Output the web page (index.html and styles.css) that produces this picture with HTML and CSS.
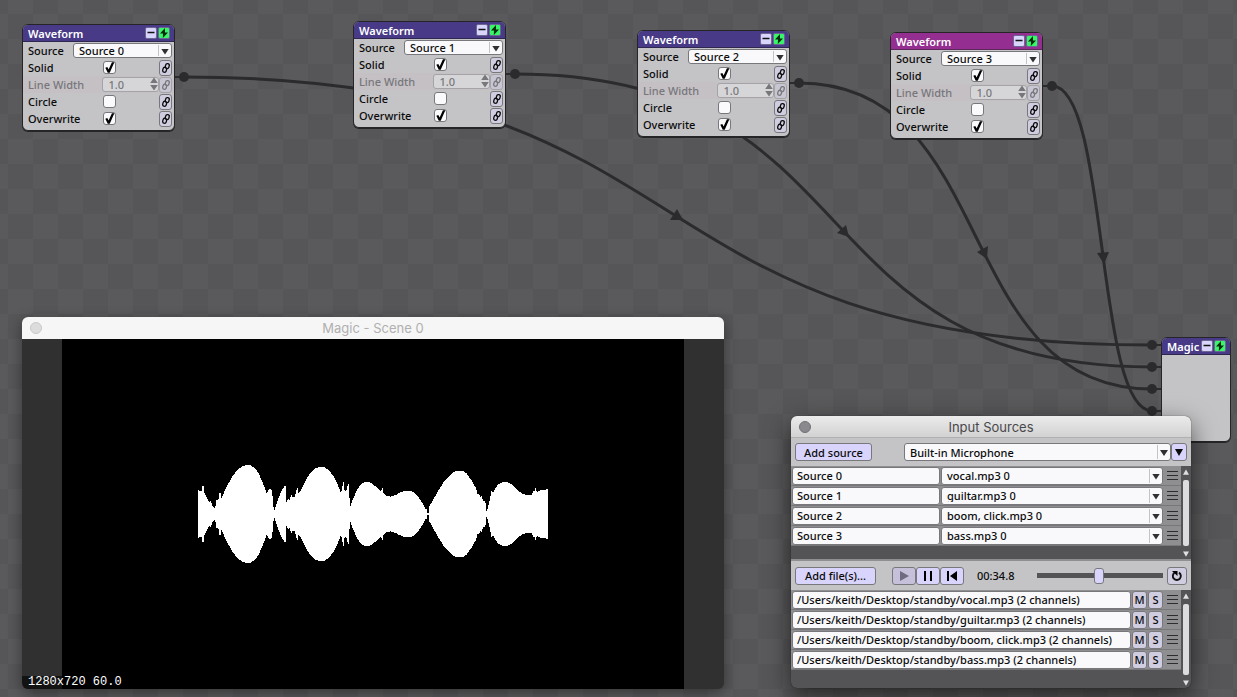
FILE: index.html
```
<!DOCTYPE html>
<html lang="en">
<head>
<meta charset="utf-8">
<title>Magic</title>
<link rel="stylesheet" href="styles.css">
</head>
<body>
<svg class="defs" aria-hidden="true">
  <symbol id="link" viewBox="0 0 10 12"><g fill="none" stroke="currentColor" stroke-width="1.3"><rect x="4.500" y="1.500" width="3.600" height="5" rx="1.800" transform="rotate(16 6 4)"/><rect x="1.800" y="5.400" width="3.600" height="5" rx="1.800" transform="rotate(16 4 8)"/></g></symbol>
  <symbol id="minus" viewBox="0 0 12 12"><path d="M2.500 5.500h7" stroke="#111" stroke-width="1.500"/></symbol>
  <symbol id="bolt" viewBox="0 0 12 12"><path d="M7 1 2 6.500h3L4.800 11 10 5.500h-3z" fill="#062b0d"/></symbol>
  <symbol id="spin" viewBox="0 0 8 14"><path d="M4 0.500 7.800 6H.2zM4 13.500 7.800 8H.2z" fill="currentColor"/></symbol>
  <symbol id="grip" viewBox="0 0 11 11"><path d="M0 1.500h11M0 5.500h11M0 9.500h11" stroke="#2d2d2f"/></symbol>
  <symbol id="down" viewBox="0 0 8 7"><path d="M0 0h8L4 7z" fill="currentColor"/></symbol>
  <symbol id="up" viewBox="0 0 8 7"><path d="M0 7h8L4 0z" fill="currentColor"/></symbol>
</svg>
<main class="canvas">
  <svg class="wires" aria-hidden="true">
    <g class="wire">
      <path d="M184 77C725 77 611 345 1152 345"/>
      <path d="M515 74C876 74 791 367 1152 367"/>
      <path d="M799 83C1000 83 951 389 1152 389"/>
      <path d="M1052 86C1109 86 1095 411 1152 411"/>
    </g>
    <path class="stub" d="M175 77h9M506 74h9M790 83h9M1043 86h9M1152 345h9M1152 367h9M1152 389h9M1152 411h9"/>
    <g class="joint">
      <circle cx="184" cy="77" r="5"/><circle cx="515" cy="74" r="5"/><circle cx="799" cy="83" r="5"/><circle cx="1052" cy="86" r="5"/>
      <circle cx="1152" cy="345" r="5"/><circle cx="1152" cy="367" r="5"/><circle cx="1152" cy="389" r="5"/><circle cx="1152" cy="411" r="5"/>
      <path d="M683 220 670 220 677 209z"/><path d="M849 237 837 233 846 225z"/><path d="M987 259 977 252 988 246z"/><path d="M1104 264 1097 253 1109 252z"/>
    </g>
  </svg>

  <section class="node n0">
    <header class="bar"><h2>Waveform</h2><button class="mini" aria-label="Collapse"><svg><use href="#minus"/></svg></button><button class="mini on" aria-label="Active"><svg><use href="#bolt"/></svg></button></header>
    <div class="row"><label for="a1">Source</label><span class="pick"><select id="a1"><option>Source 0</option></select></span></div>
    <div class="row"><label for="a2">Solid</label><input type="checkbox" id="a2" checked><button class="link" aria-label="Link Solid"><svg><use href="#link"/></svg></button></div>
    <div class="row off"><label for="a3">Line Width</label><span class="num"><input type="text" id="a3" value="1.0" disabled><svg><use href="#spin"/></svg></span><button class="link" disabled aria-label="Link Line Width"><svg><use href="#link"/></svg></button></div>
    <div class="row"><label for="a4">Circle</label><input type="checkbox" id="a4"><button class="link" aria-label="Link Circle"><svg><use href="#link"/></svg></button></div>
    <div class="row"><label for="a5">Overwrite</label><input type="checkbox" id="a5" checked><button class="link" aria-label="Link Overwrite"><svg><use href="#link"/></svg></button></div>
  </section>

  <section class="node n1">
    <header class="bar"><h2>Waveform</h2><button class="mini" aria-label="Collapse"><svg><use href="#minus"/></svg></button><button class="mini on" aria-label="Active"><svg><use href="#bolt"/></svg></button></header>
    <div class="row"><label for="b1">Source</label><span class="pick"><select id="b1"><option>Source 1</option></select></span></div>
    <div class="row"><label for="b2">Solid</label><input type="checkbox" id="b2" checked><button class="link" aria-label="Link Solid"><svg><use href="#link"/></svg></button></div>
    <div class="row off"><label for="b3">Line Width</label><span class="num"><input type="text" id="b3" value="1.0" disabled><svg><use href="#spin"/></svg></span><button class="link" disabled aria-label="Link Line Width"><svg><use href="#link"/></svg></button></div>
    <div class="row"><label for="b4">Circle</label><input type="checkbox" id="b4"><button class="link" aria-label="Link Circle"><svg><use href="#link"/></svg></button></div>
    <div class="row"><label for="b5">Overwrite</label><input type="checkbox" id="b5" checked><button class="link" aria-label="Link Overwrite"><svg><use href="#link"/></svg></button></div>
  </section>

  <section class="node n2">
    <header class="bar"><h2>Waveform</h2><button class="mini" aria-label="Collapse"><svg><use href="#minus"/></svg></button><button class="mini on" aria-label="Active"><svg><use href="#bolt"/></svg></button></header>
    <div class="row"><label for="c1">Source</label><span class="pick"><select id="c1"><option>Source 2</option></select></span></div>
    <div class="row"><label for="c2">Solid</label><input type="checkbox" id="c2" checked><button class="link" aria-label="Link Solid"><svg><use href="#link"/></svg></button></div>
    <div class="row off"><label for="c3">Line Width</label><span class="num"><input type="text" id="c3" value="1.0" disabled><svg><use href="#spin"/></svg></span><button class="link" disabled aria-label="Link Line Width"><svg><use href="#link"/></svg></button></div>
    <div class="row"><label for="c4">Circle</label><input type="checkbox" id="c4"><button class="link" aria-label="Link Circle"><svg><use href="#link"/></svg></button></div>
    <div class="row"><label for="c5">Overwrite</label><input type="checkbox" id="c5" checked><button class="link" aria-label="Link Overwrite"><svg><use href="#link"/></svg></button></div>
  </section>

  <section class="node n3 selected">
    <header class="bar"><h2>Waveform</h2><button class="mini" aria-label="Collapse"><svg><use href="#minus"/></svg></button><button class="mini on" aria-label="Active"><svg><use href="#bolt"/></svg></button></header>
    <div class="row"><label for="d1">Source</label><span class="pick"><select id="d1"><option>Source 3</option></select></span></div>
    <div class="row"><label for="d2">Solid</label><input type="checkbox" id="d2" checked><button class="link" aria-label="Link Solid"><svg><use href="#link"/></svg></button></div>
    <div class="row off"><label for="d3">Line Width</label><span class="num"><input type="text" id="d3" value="1.0" disabled><svg><use href="#spin"/></svg></span><button class="link" disabled aria-label="Link Line Width"><svg><use href="#link"/></svg></button></div>
    <div class="row"><label for="d4">Circle</label><input type="checkbox" id="d4"><button class="link" aria-label="Link Circle"><svg><use href="#link"/></svg></button></div>
    <div class="row"><label for="d5">Overwrite</label><input type="checkbox" id="d5" checked><button class="link" aria-label="Link Overwrite"><svg><use href="#link"/></svg></button></div>
  </section>

  <section class="node magic">
    <header class="bar"><h2>Magic</h2><button class="mini" aria-label="Collapse"><svg><use href="#minus"/></svg></button><button class="mini on" aria-label="Active"><svg><use href="#bolt"/></svg></button></header>
    <div class="blank"></div>
  </section>

  <section class="window scene">
    <header class="title"><button class="dot" aria-label="Close"></button><h1>Magic - Scene 0</h1></header>
    <div class="stage">
      <svg class="wave" viewBox="24 0 1050 384" shape-rendering="crispEdges" role="img" aria-label="Waveform">
        <path id="half" fill="#fff" d="M24 193V120L35 124 36 108H41L43 128 52 145 57 158 62 152 66 165 72 174H76L78 150H84L86 145 88 130H92L95 145 100 132 110 110 125 83 140 62 155 50 165 46H182L195 55 205 69 215 90 225 115 229 130 235 122 240 115 244 118 248 140 250 170 254 180 258 168 265 145 275 122 284 108H287L288 158 295 145 300 152 303 132 308 143 315 140 318 124 322 110 326 130 330 125 340 105 350 86 362 67 375 56 388 51H402L415 59 430 78 442 102 450 122 453 130 456 118 459 97H462L464 128 470 118 474 102H477L478 140 481 170 488 150 500 122 510 106 522 97 530 95 540 97 555 108 573 125 576 114H579L580 130 590 138 602 140 615 136 630 128 645 123 662 122 675 130 688 145 700 163 707 178H711L712 188H717L718 170 730 148 745 122 760 98 775 80 790 67 802 62H818L830 70 845 92 858 115 864 136 867 128 870 142 874 138 880 154H886L889 184 892 178 898 155 905 122 910 128 915 115 925 103 938 96H952L965 103 980 118 995 130 1010 135 1025 134 1030 122 1034 122 1037 114 1040 126 1055 120 1074 118V193z"/>
        <use href="#half" transform="translate(0 384) scale(1 -1)"/>
      </svg>
    </div>
    <p class="stats">1280x720 60.0</p>
  </section>

  <section class="window inputs">
    <header class="title"><button class="dot" aria-label="Close"></button><h1>Input Sources</h1></header>
    <div class="tools">
      <button class="btn add">Add source</button>
      <span class="pick device"><select aria-label="Device"><option>Built-in Microphone</option></select></span>
      <button class="btn more" aria-label="More"><svg><use href="#down"/></svg></button>
    </div>
    <div class="list first">
      <ul>
        <li><input type="text" class="name" aria-label="Name" value="Source 0"><span class="pick"><select aria-label="Channel"><option>vocal.mp3 0</option></select></span><svg class="grip"><use href="#grip"/></svg></li>
        <li><input type="text" class="name" aria-label="Name" value="Source 1"><span class="pick"><select aria-label="Channel"><option>guiltar.mp3 0</option></select></span><svg class="grip"><use href="#grip"/></svg></li>
        <li><input type="text" class="name" aria-label="Name" value="Source 2"><span class="pick"><select aria-label="Channel"><option>boom, click.mp3 0</option></select></span><svg class="grip"><use href="#grip"/></svg></li>
        <li><input type="text" class="name" aria-label="Name" value="Source 3"><span class="pick"><select aria-label="Channel"><option>bass.mp3 0</option></select></span><svg class="grip"><use href="#grip"/></svg></li>
      </ul>
      <div class="scroll"><svg><use href="#up"/></svg><i></i><svg><use href="#down"/></svg></div>
    </div>
    <div class="tools transport">
      <button class="btn files">Add file(s)...</button>
      <div class="keys">
        <button class="btn" disabled aria-label="Play"><svg viewBox="0 0 12 12"><path d="M2 1 11 6 2 11z" fill="#716a80"/></svg></button>
        <button class="btn" aria-label="Pause"><svg viewBox="0 0 12 12"><path d="M2 1h2v10H2zM8 1h2v10H8z"/></svg></button>
        <button class="btn" aria-label="Rewind"><svg viewBox="0 0 12 12"><path d="M1 1h2v10H1zM11 1v10L4 6z"/></svg></button>
      </div>
      <output class="time">00:34.8</output>
      <input type="range" class="seek" aria-label="Position" min="0" max="100" value="49">
      <button class="btn loop" aria-label="Loop"><svg viewBox="0 0 12 12"><path d="M8 2.600A4 4 0 1 1 3.500 2.700" fill="none" stroke="#111" stroke-width="1.900"/><path d="M1 1h5.500v5z"/></svg></button>
    </div>
    <div class="list second">
      <ul>
        <li><input type="text" class="path" aria-label="File" value="/Users/keith/Desktop/standby/vocal.mp3 (2 channels)"><button class="ms">M</button><button class="ms">S</button><svg class="grip"><use href="#grip"/></svg></li>
        <li><input type="text" class="path" aria-label="File" value="/Users/keith/Desktop/standby/guiltar.mp3 (2 channels)"><button class="ms">M</button><button class="ms">S</button><svg class="grip"><use href="#grip"/></svg></li>
        <li><input type="text" class="path" aria-label="File" value="/Users/keith/Desktop/standby/boom, click.mp3 (2 channels)"><button class="ms">M</button><button class="ms">S</button><svg class="grip"><use href="#grip"/></svg></li>
        <li><input type="text" class="path" aria-label="File" value="/Users/keith/Desktop/standby/bass.mp3 (2 channels)"><button class="ms">M</button><button class="ms">S</button><svg class="grip"><use href="#grip"/></svg></li>
      </ul>
      <div class="scroll"><svg><use href="#up"/></svg><i></i><svg><use href="#down"/></svg></div>
    </div>
  </section>
</main>
</body>
</html>
```
FILE: styles.css
```
* { box-sizing: border-box; }
body { margin: 0; color: #0b0b0b; font: 500 11px/15px "Noto Sans", "Open Sans", sans-serif; }
h1, h2, p, ul { margin: 0; padding: 0; list-style: none; }
button, input, select { margin: 0; padding: 0; font: inherit; color: inherit; border: 1px solid #77777c; border-radius: 3px; appearance: none; }
button { display: flex; align-items: center; justify-content: center; }
button:disabled, input:disabled { color: inherit; }
.defs { position: absolute; width: 0; height: 0; }

.canvas {
  position: relative;
  min-height: 100vh;
  overflow: hidden;
  background: repeating-conic-gradient(#5a5a5c 0 25%, #565658 0 50%) 8px 14px / 50px 50px;
}
.wires { position: absolute; inset: 0; width: 100%; height: 100%; }
.wire { fill: none; stroke: #2b2b2d; stroke-width: 3; }
.stub { stroke: #2b2b2d; stroke-width: 2; }
.joint { fill: #2b2b2d; }

.node {
  position: absolute;
  width: 153px;
  padding-bottom: 3px;
  background: #c4c4c6;
  border: 1px solid #252527;
  border-radius: 6px;
  box-shadow: 0 1px 0 #252527;
  overflow: hidden;
}
.n0 { left: 22px; top: 24px; }
.n1 { left: 353px; top: 21px; }
.n2 { left: 637px; top: 30px; }
.n3 { left: 890px; top: 32px; }
.magic { left: 1161px; top: 337px; width: 70px; padding-bottom: 0; }
.blank { height: 86px; }
.bar { display: flex; align-items: center; gap: 1px; height: 17px; padding: 0 4px 0 5px; background: #483a86; border-bottom: 1px solid #2e2850; }
.selected .bar { background: #942f91; border-color: #5f255d; }
.bar h2 { flex: 1; font-size: 11px; font-weight: 600; color: #fff; }
.mini { width: 12px; height: 12px; background: #d8d4fb; border-color: #6c6693; border-radius: 2px; }
.mini.on { background: #37f768; }
.mini svg { flex: none; width: 12px; height: 12px; }
.row { display: flex; align-items: center; height: 17px; padding: 0 2px 0 5px; }
.row label { width: 75px; }
.row .pick { flex: 1; }
.row:has(.pick) label { width: 45px; }
.row .link { margin-left: auto; }
.off { color: #77777b; background: #c4c0c4; }
.link { width: 13px; height: 16px; background: #d0cde0; }
.link svg { flex: none; width: 10px; height: 12px; }
.link:disabled { background: #c9c6d3; border-color: #a3a3a8; }
input[type="checkbox"] { display: grid; width: 13px; height: 13px; background: #fafafc; }
input[type="checkbox"]:checked::before { content: ""; background: #000; clip-path: polygon(12% 52%, 30% 45%, 42% 68%, 72% 2%, 94% 2%, 52% 98%, 34% 98%); }
.num { position: relative; display: flex; width: 57px; height: 15px; }
.num input { width: 100%; padding-left: 5px; background: #d6d6d8; border-color: #a3a3a8; }
.num svg { position: absolute; right: 1px; top: 0; width: 8px; height: 14px; }

.pick { position: relative; display: flex; height: 15px; }
.pick select { flex: 1; min-width: 0; padding: 0 16px 0 5px; line-height: 13px; background: #f9f9fb; }
.pick::before { content: ""; position: absolute; right: 13px; top: 2px; bottom: 2px; width: 1px; background: #c4c4c6; }
.pick::after { content: ""; position: absolute; right: 3px; top: calc(50% - 2px); width: 8px; height: 6px; background: #303032; clip-path: polygon(0 0, 100% 0, 50% 100%); }

.window { position: absolute; display: flex; flex-direction: column; border-radius: 6px; overflow: hidden; }
.title { display: grid; grid-template-columns: 26px 1fr 26px; align-items: center; height: 22px; }
.title h1 { font: 13px/20px Inter, sans-serif; text-align: center; }
.dot { width: 12px; height: 12px; margin-left: 8px; border-radius: 50%; }
.scene { left: 22px; top: 317px; width: 702px; height: 372px; background: #303030; box-shadow: 0 4px 14px #0006; }
.scene .title { background: #f6f6f6; color: #b0b0b0; }
.scene .dot { background: #dcdcdc; border-color: #c8c8c8; }
.stage { flex: 1; display: grid; place-items: center; margin: 0 40px; background: #000; }
.wave { width: 350px; height: 128px; }
.stats { position: absolute; left: 0; bottom: 0; padding: 0 6px; background: #0009; color: #fff; font: 12px/13px "Liberation Mono", monospace; }

.inputs { left: 791px; top: 416px; width: 400px; height: 272px; background: #545456; box-shadow: 0 8px 24px #0009, 0 0 1px #222; }
.inputs .title { background: linear-gradient(#ebebeb, #d2d2d2); border-bottom: 1px solid #b0b0b0; color: #48484a; }
.inputs .dot { background: #8a8a8e; border-color: #707074; }
.tools { display: flex; align-items: center; height: 28px; padding: 0 4px; background: #c4c4c6; }
.btn { height: 18px; background: #d8d4fb; }
.add { width: 77px; }
.device { flex: 1; height: 18px; margin-left: 32px; }
.more { width: 16px; }
.more svg { flex: none; width: 8px; height: 7px; }
.list { display: flex; justify-content: space-between; padding-right: 2px; }
.first { height: 93px; }
.second { flex: 1; }
.list ul { width: 390px; }
.list li { display: flex; align-items: center; gap: 1px; height: 20px; padding: 0 4px 0 1px; background: #8f8f92; border-bottom: 1px solid #77777a; }
.list li input, .list li .pick, .ms { height: 18px; }
.list input { min-width: 0; padding-left: 4px; background: #f9f9fb; }
.list .name { width: 148px; }
.list .pick, .path { flex: 1; }
.ms { width: 15px; background: #d0cde0; }
.grip { width: 11px; height: 11px; margin-left: 3px; }
.list li .grip { margin-right: -1px; }
.scroll { display: flex; flex-direction: column; align-items: center; gap: 5px; width: 7px; padding: 3px 0 2px; color: #e0e0e0; }
.scroll i { flex: 1; width: 6px; background: #dcdcde; border-radius: 2px; }
.scroll svg { flex: none; width: 6px; height: 6px; }
.transport { height: 31px; border-top: 2px solid #8f8f92; }
.files { width: 81px; }
.keys { display: flex; margin-left: 16px; }
.keys .btn { width: 24px; }
.keys .btn:disabled { background: #c6c0da; }
.keys svg, .loop svg { flex: none; width: 12px; height: 12px; }
.time { width: 46px; margin-left: 13px; }
.seek { flex: 1; min-width: 0; height: 16px; margin: 0 4px 0 14px; background: linear-gradient(#545456, #545456) center / 100% 5px no-repeat; border: 0; }
.seek::-webkit-slider-thumb { appearance: none; width: 10px; height: 16px; background: #d8d4fb; border: 1px solid #77777c; border-radius: 3px; }
.loop { width: 20px; background: #d0cde0; }
```
